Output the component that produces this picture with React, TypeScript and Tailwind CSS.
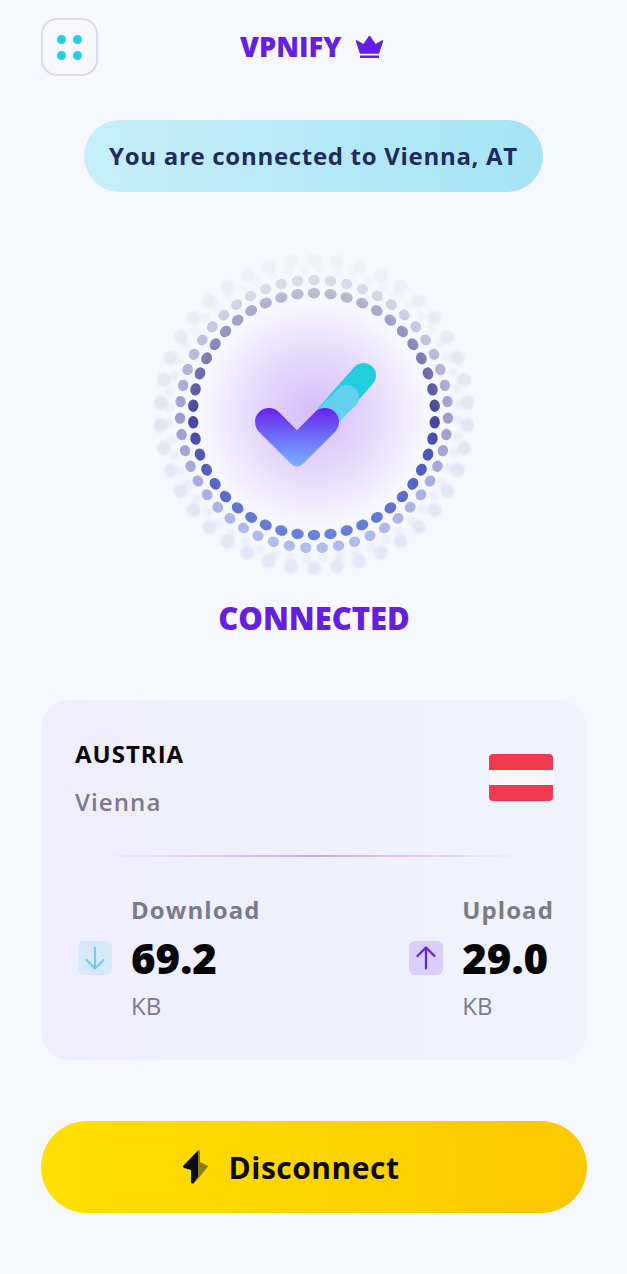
const RINGS = [
  { r: 154, n: 42, rx: 7, ry: 7, fill: 'url(#ringOuter)', opacity: 0.8, start: 0, filter: 'url(#softer)' },
  { r: 145, n: 56, rx: 5, ry: 5, fill: 'url(#ringOuter)', opacity: 0.4, start: 0.4, filter: 'url(#softer)' },
  { r: 134, n: 51, rx: 5.7, ry: 5.2, fill: 'url(#ringInner)', opacity: 0.5, start: 0, filter: 'url(#soft)' },
  { r: 121, n: 46, rx: 6.2, ry: 5.2, fill: 'url(#ringInner)', opacity: 1, start: 0, filter: 'url(#soft)' },
]

function DotRings() {
  return (
    <svg width="320" height="320" viewBox="153 254 320 320" className="block">
      <defs>
        <linearGradient id="ringInner" gradientUnits="userSpaceOnUse" x1="313" y1="290" x2="313" y2="540">
          <stop offset="0" stopColor="#c0bfd4" />
          <stop offset="0.25" stopColor="#8581b8" />
          <stop offset="0.5" stopColor="#45459a" />
          <stop offset="0.75" stopColor="#5463c4" />
          <stop offset="1" stopColor="#6a85d8" />
        </linearGradient>
        <linearGradient id="ringOuter" gradientUnits="userSpaceOnUse" x1="313" y1="260" x2="313" y2="570">
          <stop offset="0" stopColor="#eeeef8" />
          <stop offset="0.5" stopColor="#dfe0ee" />
          <stop offset="1" stopColor="#dfe3f6" />
        </linearGradient>
        <radialGradient id="glow" gradientUnits="userSpaceOnUse" cx="313" cy="414" r="112">
          <stop offset="0" stopColor="#d5bdfa" />
          <stop offset="0.45" stopColor="#e3d4fb" />
          <stop offset="1" stopColor="#f7f7ff" />
        </radialGradient>
        <linearGradient id="checkFill" gradientUnits="userSpaceOnUse" x1="296" y1="408" x2="296" y2="467">
          <stop offset="0" stopColor="#6a1fe8" />
          <stop offset="0.5" stopColor="#6f70fa" />
          <stop offset="1" stopColor="#7ab2ff" />
        </linearGradient>
        <filter id="soft" x="-5%" y="-5%" width="110%" height="110%">
          <feGaussianBlur stdDeviation="0.5" />
        </filter>
        <filter id="softer" x="-5%" y="-5%" width="110%" height="110%">
          <feGaussianBlur stdDeviation="1" />
        </filter>
      </defs>
      <circle cx="313" cy="414" r="112" fill="url(#glow)" />
      {RINGS.map((ring) => (
        <g key={ring.r} filter={ring.filter}>
          {Array.from({ length: ring.n }).map((_, i) => {
            const a = ((i + ring.start) / ring.n) * Math.PI * 2
            const x = 313 + ring.r * Math.sin(a)
            const y = 414 - ring.r * Math.cos(a)
            return (
              <ellipse
                key={i}
                cx={x}
                cy={y}
                rx={ring.rx}
                ry={ring.ry}
                fill={ring.fill}
                opacity={ring.opacity}
                transform={`rotate(${(a * 180) / Math.PI} ${x} ${y})`}
              />
            )
          })}
        </g>
      ))}
      <path d="M362.5 375.5L326 417" stroke="#22cde0" strokeWidth="25" strokeLinecap="round" fill="none" />
      <path d="M346 397L326 417" stroke="#62d0ee" strokeWidth="24" strokeLinecap="round" fill="none" />
      <path
        d="M258.1 431.9A14 14 0 0 1 277.9 412.1L296 430.2L314.1 412.1A14 14 0 0 1 333.9 431.9L302 463.8Q296 469.8 290 463.8Z"
        fill="url(#checkFill)"
      />
    </svg>
  )
}

function Crown() {
  return (
    <svg width="29" height="24" viewBox="0 0 29 24" className="block">
      <path d="M14.5 1.5L20.5 10L27.5 6L23.5 18H5.5L1.5 6L8.5 10Z" fill="#6420e0" stroke="#6420e0" strokeWidth="1.5" strokeLinejoin="round" />
      <rect x="5" y="20.5" width="19" height="2.5" fill="#6420e0" />
    </svg>
  )
}

function Stat({ label, value, down }: { label: string; value: string; down?: boolean }) {
  return (
    <div className="flex items-center gap-[19px]">
      <div
        className={`w-[34px] h-[34px] rounded-md flex items-center justify-center ${down ? 'bg-[#d6e9fb]' : 'bg-[#d9cffa]'}`}
      >
        <svg width="24" height="24" viewBox="0 0 24 24" fill="none" stroke={down ? '#6fd0e8' : '#6420e0'} strokeWidth="2.2" strokeLinecap="round" strokeLinejoin="round">
          {down ? <path d="M12 1.5V22.5M3.5 14L12 22.5L20.5 14" /> : <path d="M12 22.5V1.5M3.5 10L12 1.5L20.5 10" />}
        </svg>
      </div>
      <div>
        <p className="text-[24px] leading-[32px] font-bold tracking-[1.1px] text-[#7a7a88]">{label}</p>
        <p className="text-[42px] leading-[64px] font-extrabold text-[#050508]">{value}</p>
        <p className="text-[24px] leading-[32px] text-[#7a7a88]">KB</p>
      </div>
    </div>
  )
}

export default function App() {
  return (
    <div className="min-h-[1274px] bg-[#f7f7ff] pl-[41px] pr-[40px] font-['Open_Sans',sans-serif]">
      {/* Header */}
      <div className="relative pt-[18px] h-[76px]">
        <div className="w-[57px] h-[58px] rounded-2xl border-2 border-[#dcd9ee] grid grid-cols-[9px_9px] gap-[7px] place-content-center">
          <span className="w-[9px] h-[9px] rounded-full bg-[#25cbe4]" />
          <span className="w-[9px] h-[9px] rounded-full bg-[#25cbe4]" />
          <span className="w-[9px] h-[9px] rounded-full bg-[#25cbe4]" />
          <span className="w-[9px] h-[9px] rounded-full bg-[#25cbe4]" />
        </div>
        <div className="absolute left-[199px] top-[29px] flex items-center gap-[14px]">
          <span className="text-[27.3px] leading-[36px] font-extrabold text-[#6420e0]">VPNIFY</span>
          <Crown />
        </div>
      </div>

      {/* Status pill */}
      <div className="mt-[44px] ml-[43px] mr-[44px] h-[72px] rounded-full bg-gradient-to-r from-[#c6effa] to-[#a5e4f5] flex items-center justify-center">
        <span className="text-[24px] font-bold tracking-[0.7px] text-[#1f2a5e]">You are connected to Vienna, AT</span>
      </div>

      {/* Dots */}
      <div className="mt-[62px] flex justify-center">
        <DotRings />
      </div>

      <p className="mt-[22px] text-center text-[31px] leading-[44px] font-extrabold text-[#6420e0]">CONNECTED</p>

      {/* Card */}
      <div className="mt-[60px] h-[360px] rounded-[28px] bg-gradient-to-r from-[#f0eefd] to-[#f0f3fe] px-[34px] pt-[36px]">
        <div className="flex items-center justify-between">
          <div>
            <p className="text-[24px] leading-[36px] font-bold tracking-[1px] text-[#050508]">AUSTRIA</p>
            <p className="mt-[12px] text-[24px] leading-[36px] font-semibold tracking-[1.1px] text-[#7a7a88]">Vienna</p>
          </div>
          <div className="-mt-px w-[64px] h-[47px] rounded-[4px] overflow-hidden flex flex-col">
            <div className="h-[16px] bg-[#f03a50]" />
            <div className="h-[15px] bg-[#f8f6f8]" />
            <div className="h-[16px] bg-[#f03a50]" />
          </div>
        </div>
        <div className="mt-[35px] mx-[28px] h-[2px] bg-gradient-to-r from-transparent via-[#cda8e0] to-transparent" />
        <div className="mt-[37px] -mr-px flex justify-between pl-[3px]">
          <Stat label="Download" value="69.2" down />
          <Stat label="Upload" value="29.0" />
        </div>
      </div>

      {/* Disconnect */}
      <button className="mt-[61px] w-full h-[92px] rounded-full bg-gradient-to-r from-[#ffe000] to-[#ffc800] flex items-center justify-center gap-[20px] pr-[46px]">
        <svg width="26" height="34" viewBox="0 0 26 34" className="block">
          <path d="M15 0.5L17 0V12L25.5 16L12 32.5L15 27Z" fill="#8f7c10" />
          <path d="M15 0.5V27L10.5 33.5Q8 34 8 32V20L1 18Q-0.5 17 0.5 15.5Z" fill="#0c0c0c" />
        </svg>
        <span className="text-[30px] font-bold tracking-[0.5px] text-[#0c0c0c]">Disconnect</span>
      </button>
    </div>
  )
}
